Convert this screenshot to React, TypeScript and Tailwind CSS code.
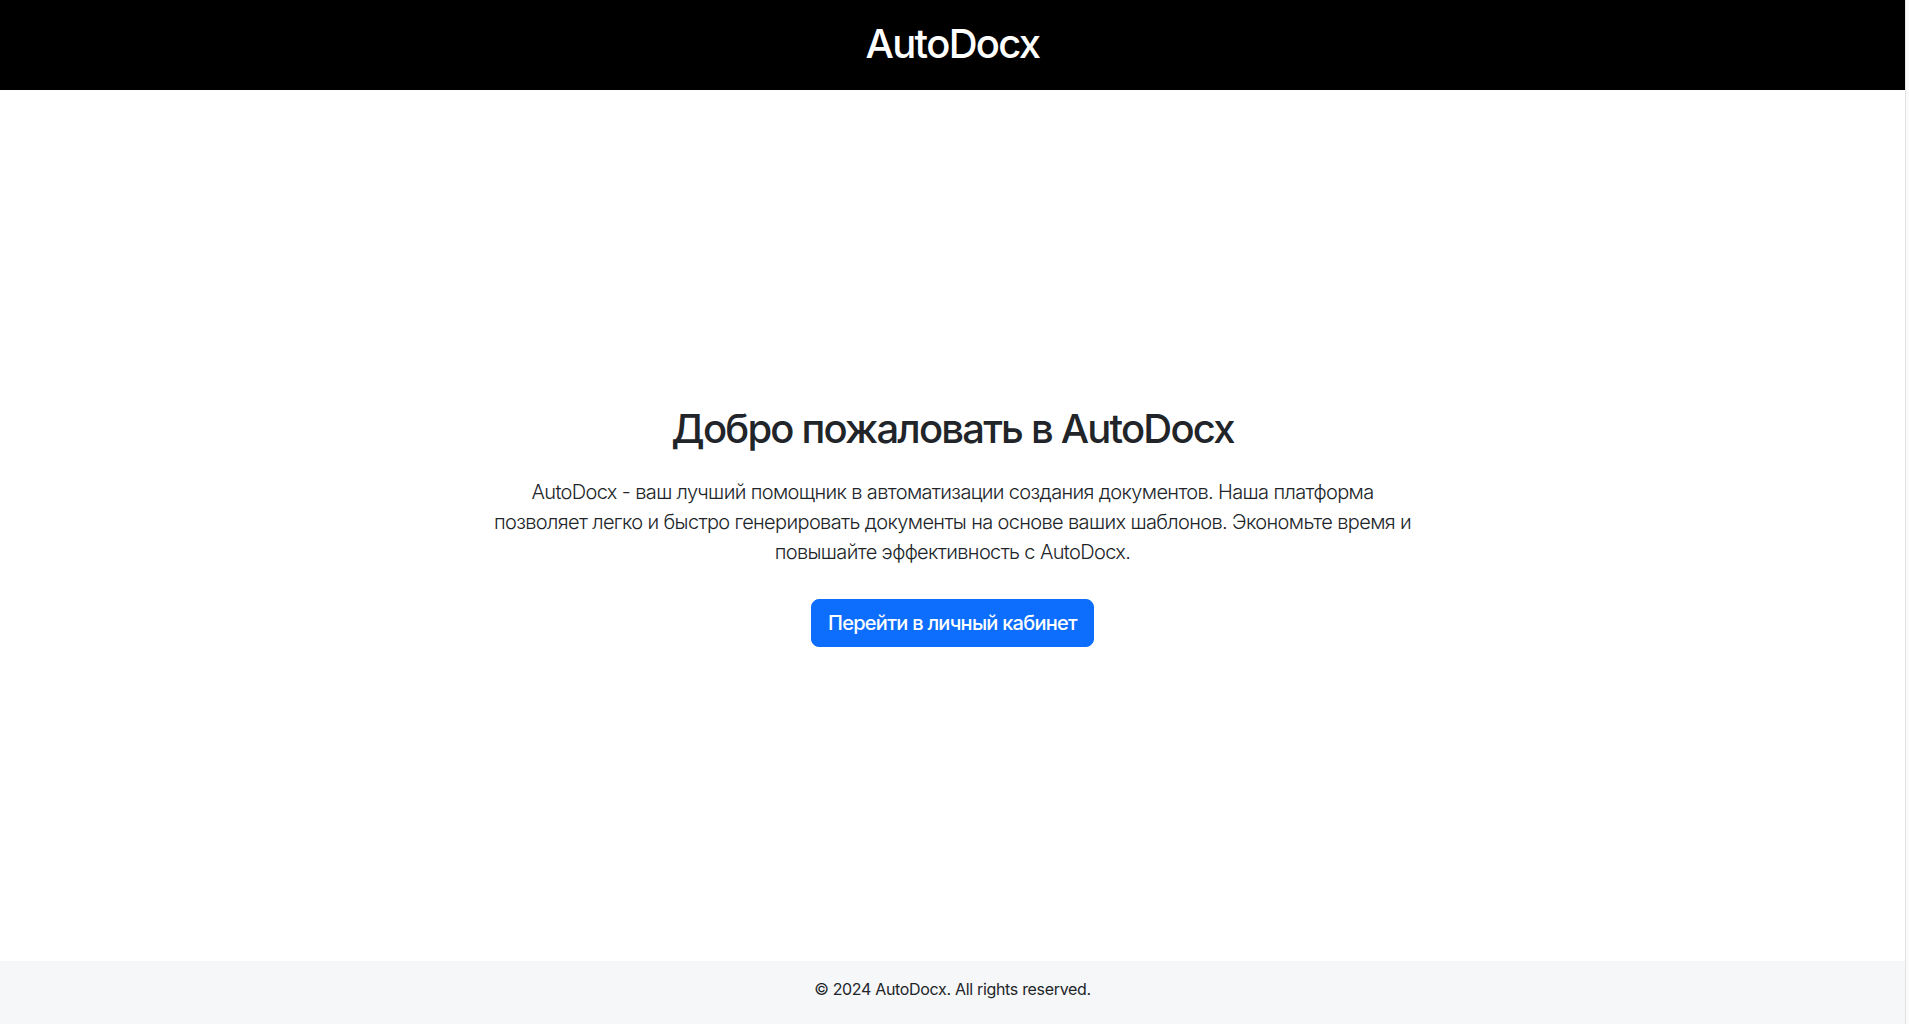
export default function App() {
  return (
    <div className="flex min-h-screen bg-white" style={{ fontFamily: 'Inter, "Noto Sans", sans-serif' }}>
      <div className="flex min-h-screen flex-1 flex-col text-[#212529]">
        {/* Header */}
        <header className="flex h-[90px] items-center justify-center bg-black pb-[2px]">
          <h1 className="text-[40px] font-medium leading-[48px] tracking-[-0.042em] text-white">AutoDocx</h1>
        </header>

        {/* Hero */}
        <main className="flex flex-1 flex-col items-center justify-center px-4 text-center">
          <h2 className="mb-[24px] text-[40px] font-medium leading-[48px] tracking-[-0.045em]">
            Добро пожаловать в AutoDocx
          </h2>
          <p className="max-w-[940px] text-[20px] font-light leading-[30px] tracking-[-0.032em]">
            AutoDocx - ваш лучший помощник в автоматизации создания документов. Наша платформа позволяет легко и быстро
            генерировать документы на основе ваших шаблонов. Экономьте время и повышайте эффективность с AutoDocx.
          </p>
          <a
            href="#"
            className="mt-8 inline-block rounded-lg border border-[#0d6efd] bg-[#0d6efd] px-4 py-2 text-[20px] font-medium leading-[30px] tracking-[-0.037em] text-white"
          >
            Перейти в личный кабинет
          </a>
        </main>

        {/* Footer */}
        <footer className="bg-[#f6f7f9] pt-4 pb-[23px] text-center">
          <p className="text-[16px] leading-[24px] tracking-[-0.02em]">© 2024 AutoDocx. All rights reserved.</p>
        </footer>
      </div>
      <div className="w-[4px] border-l border-[#e2e2e2] bg-[#fafafa]" />
    </div>
  );
}
